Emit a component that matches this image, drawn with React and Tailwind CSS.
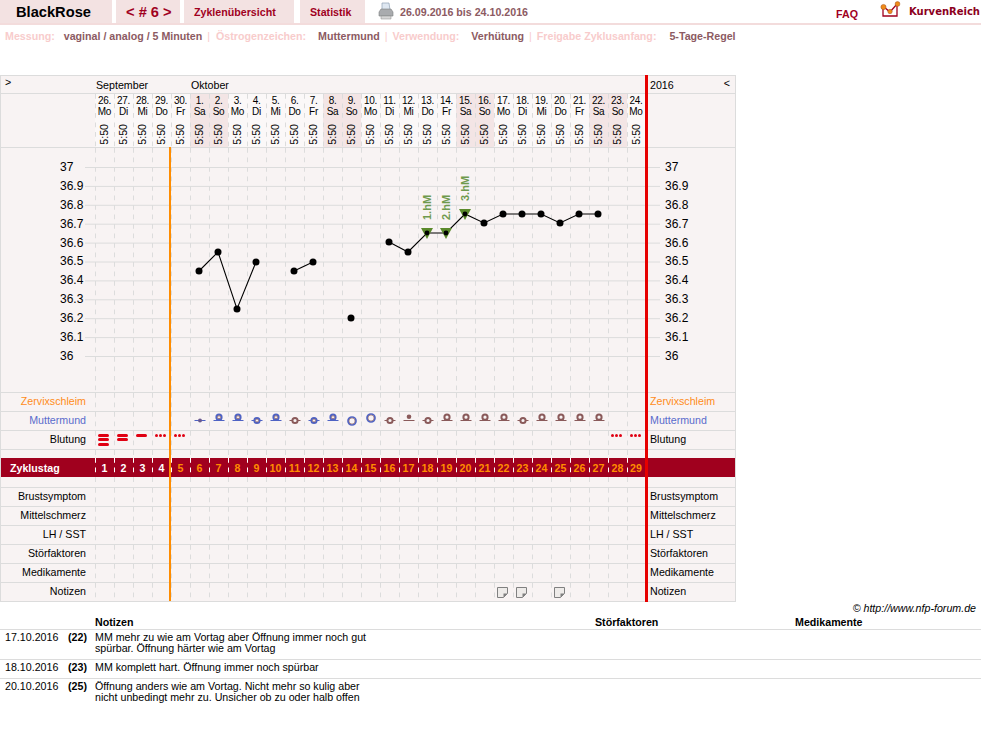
const days = [
  ["26.", "Mo"], ["27.", "Di"], ["28.", "Mi"], ["29.", "Do"], ["30.", "Fr"],
  ["1.", "Sa"], ["2.", "So"], ["3.", "Mo"], ["4.", "Di"], ["5.", "Mi"],
  ["6.", "Do"], ["7.", "Fr"], ["8.", "Sa"], ["9.", "So"], ["10.", "Mo"],
  ["11.", "Di"], ["12.", "Mi"], ["13.", "Do"], ["14.", "Fr"], ["15.", "Sa"],
  ["16.", "So"], ["17.", "Mo"], ["18.", "Di"], ["19.", "Mi"], ["20.", "Do"],
  ["21.", "Fr"], ["22.", "Sa"], ["23.", "So"], ["24.", "Mo"],
];

const temps = ["37", "36.9", "36.8", "36.7", "36.6", "36.5", "36.4", "36.3", "36.2", "36.1", "36"];

const gridCols = "grid grid-cols-[94px_repeat(28,19px)_18px_3px_1fr]";
const dash = "bg-[linear-gradient(#dcdcdc_55%,transparent_55%)] bg-[length:1px_9.5px] bg-repeat-y";
const dashWhite = "bg-[linear-gradient(#ffffff_55%,transparent_55%)] bg-[length:1px_9.5px] bg-repeat-y";

function DayCell({ children }) {
  return <div className={"relative flex items-center justify-center " + dash}>{children}</div>;
}

function Row({ label, labelClass = "text-black", h = "h-[19px]", right, cells = {} }) {
  return (
    <div className={gridCols + " border-b border-[#dcdcdc] " + h}>
      <div className={"flex items-center justify-end pr-[9px] pb-[2px] " + labelClass}>{label}</div>
      {days.map((d, i) => (
        <DayCell key={i}>{cells[i]}</DayCell>
      ))}
      <div />
      <div className={"flex items-center pl-[2px] pb-[2px] " + labelClass}>{right}</div>
    </div>
  );
}

function Bars({ n }) {
  return (
    <div className="absolute top-[3px] left-[3px] flex flex-col gap-[1.3px]">
      {Array.from({ length: n }).map((_, i) => (
        <div key={i} className="h-[3px] w-[11px] rounded-full bg-[#e00012]" />
      ))}
    </div>
  );
}

function Dots() {
  return (
    <div className="absolute top-[3px] left-[3px] flex gap-[1px]">
      <div className="w-[3px] h-[3px] rounded-full bg-[#e00012]" />
      <div className="w-[3px] h-[3px] rounded-full bg-[#e00012]" />
      <div className="w-[3px] h-[3px] rounded-full bg-[#e00012]" />
    </div>
  );
}

// kind: dot | low | high | bigLow | bigHigh | dotHigh
function Mouth({ kind, color }) {
  const blue = color === "blue";
  const ring = blue ? "#4f63c4" : "#8a5a5a";
  const line = blue ? "#4f63c4" : "#8a5a5a";
  const big = kind === "bigLow" || kind === "bigHigh";
  const cy = { low: 8.5, high: 5.2, bigLow: 9, bigHigh: 6 }[kind];
  return (
    <svg width="18" height="18" viewBox="0 0 18 18">
      {!big && <line x1="3.5" y1="8.5" x2="14.5" y2="8.5" stroke={line} />}
      {kind === "dot" && <circle cx="9" cy="8.5" r="2" fill="#6a5a90" />}
      {kind === "dotHigh" && <circle cx="9" cy="4.7" r="2.3" fill={ring} />}
      {(kind === "low" || kind === "high") && (
        <g>
          <circle cx="9" cy={cy} r="2.6" fill="#f8f3f3" stroke={ring} strokeWidth="2" />
          {blue && <circle cx="9" cy={cy} r="1.5" fill="#f8f3f3" stroke="#8a5a5a" strokeWidth="0.7" />}
        </g>
      )}
      {big && (
        <g>
          <circle cx="9" cy={cy} r="4" fill="#f8f3f3" stroke={ring} strokeWidth="1.7" />
          <circle cx="9" cy={cy} r="3" fill="none" stroke="#8a5a5a" strokeWidth="0.6" />
        </g>
      )}
    </svg>
  );
}

function NoteIcon() {
  return (
    <svg className="-ml-[2px]" width="13" height="13" viewBox="0 0 13 13">
      <path d="M1.5 1.5h10v6l-4 4h-6z" fill="#eeebe9" stroke="#808080" />
      <path d="M7.5 11.5v-4h4z" fill="#808080" />
    </svg>
  );
}

const mouthCells = {
  5: <Mouth kind="dot" color="blue" />,
  6: <Mouth kind="high" color="blue" />,
  7: <Mouth kind="high" color="blue" />,
  8: <Mouth kind="low" color="blue" />,
  9: <Mouth kind="high" color="blue" />,
  10: <Mouth kind="low" color="brown" />,
  11: <Mouth kind="low" color="blue" />,
  12: <Mouth kind="high" color="blue" />,
  13: <Mouth kind="bigLow" color="blue" />,
  14: <Mouth kind="bigHigh" color="blue" />,
  15: <Mouth kind="low" color="brown" />,
  16: <Mouth kind="dotHigh" color="brown" />,
  17: <Mouth kind="low" color="brown" />,
  18: <Mouth kind="high" color="brown" />,
  19: <Mouth kind="high" color="brown" />,
  20: <Mouth kind="high" color="brown" />,
  21: <Mouth kind="high" color="brown" />,
  22: <Mouth kind="low" color="brown" />,
  23: <Mouth kind="high" color="brown" />,
  24: <Mouth kind="high" color="brown" />,
  25: <Mouth kind="high" color="brown" />,
  26: <Mouth kind="high" color="brown" />,
};

const bleedCells = {
  0: <Bars n={3} />,
  1: <Bars n={2} />,
  2: <Bars n={1} />,
  3: <Dots />,
  4: <Dots />,
  27: <Dots />,
  28: <Dots />,
};

const noteCells = { 21: <NoteIcon />, 22: <NoteIcon />, 24: <NoteIcon /> };

const series = [
  [[199, 271], [218, 252], [237, 309], [256, 262]],
  [[294, 271], [313, 262]],
  [[351, 318]],
  [[389, 242], [408, 252], [427, 233], [446, 233], [465, 214], [484, 223], [503, 214], [522, 214], [541, 214], [560, 223], [579, 214], [598, 214]],
];

function Chart() {
  return (
    <svg className="absolute left-0 top-0" width="734" height="244" viewBox="1 148 734 244">
      {temps.map((t, i) => (
        <g key={t}>
          <line x1="85" x2="645" y1={167.5 + i * 18.9} y2={167.5 + i * 18.9} stroke="#dcdcdc" />
          <line x1="648" x2="660" y1={167.5 + i * 18.9} y2={167.5 + i * 18.9} stroke="#dcdcdc" />
        </g>
      ))}
      {series.map((s, i) => (
        <polyline key={i} points={s.map((p) => p.join(",")).join(" ")} fill="none" stroke="#000" strokeWidth="1.1" />
      ))}
      {[[427, 228], [446, 228], [465, 209]].map(([x, y]) => (
        <path key={x} d={`M${x - 6} ${y}h12l-6 11z`} fill="#5b8a2c" />
      ))}
      {series.flat().map(([x, y]) => (
        <circle key={x} cx={x} cy={y} r={x === 427 || x === 446 || x === 465 ? 2.4 : 3.5} fill="#000" />
      ))}
      {[["1.hM", 431, 220], ["2.hM", 450, 220], ["3.hM", 469, 201]].map(([t, x, y]) => (
        <text
          key={t}
          x={x}
          y={y}
          transform={`rotate(-90 ${x} ${y})`}
          fontFamily="'Liberation Sans', Arial, sans-serif"
          fontWeight="700"
          fontSize="11"
          fill="#6f9a4d"
        >
          {t}
        </text>
      ))}
    </svg>
  );
}

function Temps({ pad }) {
  return (
    <div className={"flex flex-col pt-[10px] text-[12px] " + pad}>
      {temps.map((t) => (
        <div key={t} className="h-[18.9px] leading-[18.9px]">{t}</div>
      ))}
    </div>
  );
}

function Printer() {
  return (
    <svg width="16" height="18" viewBox="0 0 16 18">
      <path d="M4 1h7l1 7H4z" fill="#dfe8f2" stroke="#8fa0b5" strokeWidth="0.7" />
      <path d="M1 10l2-3h10l2 3v4H1z" fill="#a9abae" stroke="#7d7f82" strokeWidth="0.6" />
      <path d="M3 14h10v3H3z" fill="#d6d6d6" stroke="#8a8a8a" strokeWidth="0.5" />
    </svg>
  );
}

function Logo() {
  return (
    <svg width="22" height="18" viewBox="0 0 22 18">
      <path d="M3 6v9h14V3l-7 8-6-5" fill="none" stroke="#a0001e" strokeWidth="1.3" />
      <circle cx="3.5" cy="6" r="2.6" fill="#f08c1a" stroke="#a0501e" strokeWidth="0.5" />
      <circle cx="10" cy="10.5" r="2.2" fill="#f08c1a" stroke="#a0501e" strokeWidth="0.5" />
      <circle cx="17.5" cy="3" r="2.4" fill="#f08c1a" stroke="#a0501e" strokeWidth="0.5" />
    </svg>
  );
}

function Header() {
  return (
    <div className="flex h-[25px] border-b-2 border-[#f3dcdc] text-[#a0001e] font-bold text-[10.67px]">
      <div className="w-[112px] bg-[#f3e2e2] flex items-center pl-[16px] text-[14.67px] text-black">BlackRose</div>
      <div className="w-[64px] ml-[4px] bg-[#f3e2e2] flex items-center pl-[10px] text-[14.67px]">&lt; # 6 &gt;</div>
      <div className="w-[110px] ml-[4px] bg-[#f3e2e2] flex items-center pl-[10px] pt-[1px]">Zyklenübersicht</div>
      <div className="w-[65px] ml-[6px] bg-[#f3e2e2] flex items-center pl-[10px] pt-[1px]">Statistik</div>
      <div className="ml-[13px] mt-[2px]"><Printer /></div>
      <div className="ml-[6px] mt-[4px] text-[#8c5a62]">26.09.2016 bis 24.10.2016</div>
      <div className="ml-auto mt-[6px] mr-[22px]">FAQ</div>
      <div className="mr-[7px] mt-[1px]"><Logo /></div>
      <div className="mr-[1px] mt-[4px] text-[10px] text-[#8b0020] font-['DejaVu_Sans',sans-serif]">KurvenReich</div>
    </div>
  );
}

function InfoRow() {
  const lab = "text-[#f8cccc]";
  const val = "text-[#8c5a62]";
  return (
    <div className="flex pl-[5px] pt-[5px] h-[50px] font-bold text-[10.67px] leading-[13px]">
      <span className={lab}>Messung:</span>
      <span className={val + " ml-[9px]"}>vaginal / analog / 5 Minuten</span>
      <span className={lab + " font-normal ml-[5px]"}>|</span>
      <span className={lab + " ml-[6px]"}>Östrogenzeichen:</span>
      <span className={val + " ml-[12px]"}>Muttermund</span>
      <span className={lab + " font-normal ml-[5px]"}>|</span>
      <span className={lab + " ml-[5px]"}>Verwendung:</span>
      <span className={val + " ml-[12px]"}>Verhütung</span>
      <span className={lab + " font-normal ml-[5px]"}>|</span>
      <span className={lab + " ml-[5px]"}>Freigabe Zyklusanfang:</span>
      <span className={val + " ml-[13px]"}>5-Tage-Regel</span>
    </div>
  );
}

function Table() {
  return (
    <div className="relative w-[736px] border border-[#dcdcdc] bg-[#f8f3f3] text-[10.67px] text-black">
      <div className="relative flex items-center h-[18px] pt-[2px] border-b border-[#dcdcdc] leading-none">
        <span className="absolute left-[4px] top-[1px]">&gt;</span>
        <span className="ml-[95px] w-[95px]">September</span>
        <span>Oktober</span>
        <span className="absolute left-[649px] top-[4px]">2016</span>
        <span className="absolute right-[5px] top-[2px]">&lt;</span>
      </div>

      <div className={gridCols + " h-[54px] border-b border-[#dcdcdc]"}>
        <div />
        {days.map((d, i) => (
          <div
            key={i}
            className={
              "flex flex-col items-center pt-[2px] leading-[10.5px] text-[10px] tracking-[-0.3px] " +
              dash +
              (d[1] === "Sa" || d[1] === "So" ? " bg-[#f3e5e5]" : " bg-[#fbf8f8]")
            }
          >
            <span>{d[0]}</span>
            <span>{d[1]}</span>
            <span className="mt-[7px] text-[10.67px] tracking-normal [writing-mode:vertical-rl] rotate-180">5:50</span>
          </div>
        ))}
        <div />
        <div />
      </div>

      <div className={"relative " + gridCols + " h-[245px] border-b border-[#dcdcdc]"}>
        <Temps pad="pl-[59px]" />
        {days.map((d, i) => (
          <DayCell key={i} />
        ))}
        <div />
        <Temps pad="pl-[17px]" />
        <Chart />
      </div>

      <Row label="Zervixschleim" right="Zervixschleim" labelClass="text-[#ff8c1a]" />
      <Row label="Muttermund" right="Muttermund" labelClass="text-[#5a6ccc]" cells={mouthCells} />
      <Row label="Blutung" right="Blutung" cells={bleedCells} />
      <Row h="h-[8px] border-b-0" />

      <div className={gridCols + " h-[19px] bg-[#a0001e] font-bold"}>
        <div className="flex items-center pl-[9px] text-white">Zyklustag</div>
        {days.map((d, i) => (
          <div
            key={i}
            className={"flex items-center justify-center " + dashWhite + (i < 4 ? " text-white" : " text-[#ff8c00]")}
          >
            {i + 1}
          </div>
        ))}
        <div />
        <div />
      </div>

      <Row h="h-[11px]" />
      <Row label="Brustsymptom" right="Brustsymptom" />
      <Row label="Mittelschmerz" right="Mittelschmerz" />
      <Row label="LH / SST" right="LH / SST" />
      <Row label="Störfaktoren" right="Störfaktoren" />
      <Row label="Medikamente" right="Medikamente" />
      <Row label="Notizen" right="Notizen" h="h-[18px] border-b-0" cells={noteCells} />

      {/* cycle start and end markers run over all rows */}
      <div className="absolute left-[168px] top-[71px] bottom-0 w-[2px] bg-[#ff8c00]" />
      <div className="absolute left-[644px] -top-px -bottom-px w-[3px] bg-[#e60000]" />
    </div>
  );
}

const notes = [
  ["17.10.2016", "(22)", <>MM mehr zu wie am Vortag aber Öffnung immer noch gut<br />spürbar. Öffnung härter wie am Vortag</>, "h-[30px]"],
  ["18.10.2016", "(23)", "MM komplett hart. Öffnung immer noch spürbar", "h-[19px]"],
  ["20.10.2016", "(25)", <>Öffnung anders wie am Vortag. Nicht mehr so kulig aber<br />nicht unbedingt mehr zu. Unsicher ob zu oder halb offen</>, "h-[30px]"],
];

function Notes() {
  return (
    <div className="text-[10.67px] leading-[11px] text-black">
      <div className="flex justify-end pr-[5px] h-[13px] items-center italic">© http://www.nfp-forum.de</div>
      <div className="flex h-[15px] items-center border-b border-[#dcdcdc] font-bold">
        <span className="ml-[95px] w-[500px]">Notizen</span>
        <span className="w-[200px]">Störfaktoren</span>
        <span>Medikamente</span>
      </div>
      {notes.map((n, i) => (
        <div key={i} className={"flex pt-[2px] " + n[3] + (i < 2 ? " border-b border-[#dcdcdc]" : "")}>
          <span className="pl-[5px] w-[63px]">{n[0]}</span>
          <span className="font-bold w-[27px] pl-[5px]">{n[1]}</span>
          <span className="ml-[5px] flex-1">{n[2]}</span>
        </div>
      ))}
    </div>
  );
}

export default function App() {
  return (
    <div className="w-[981px] h-[729px] bg-white overflow-hidden font-['Liberation_Sans',Arial,sans-serif]">
      <Header />
      <InfoRow />
      <Table />
      <Notes />
    </div>
  );
}
